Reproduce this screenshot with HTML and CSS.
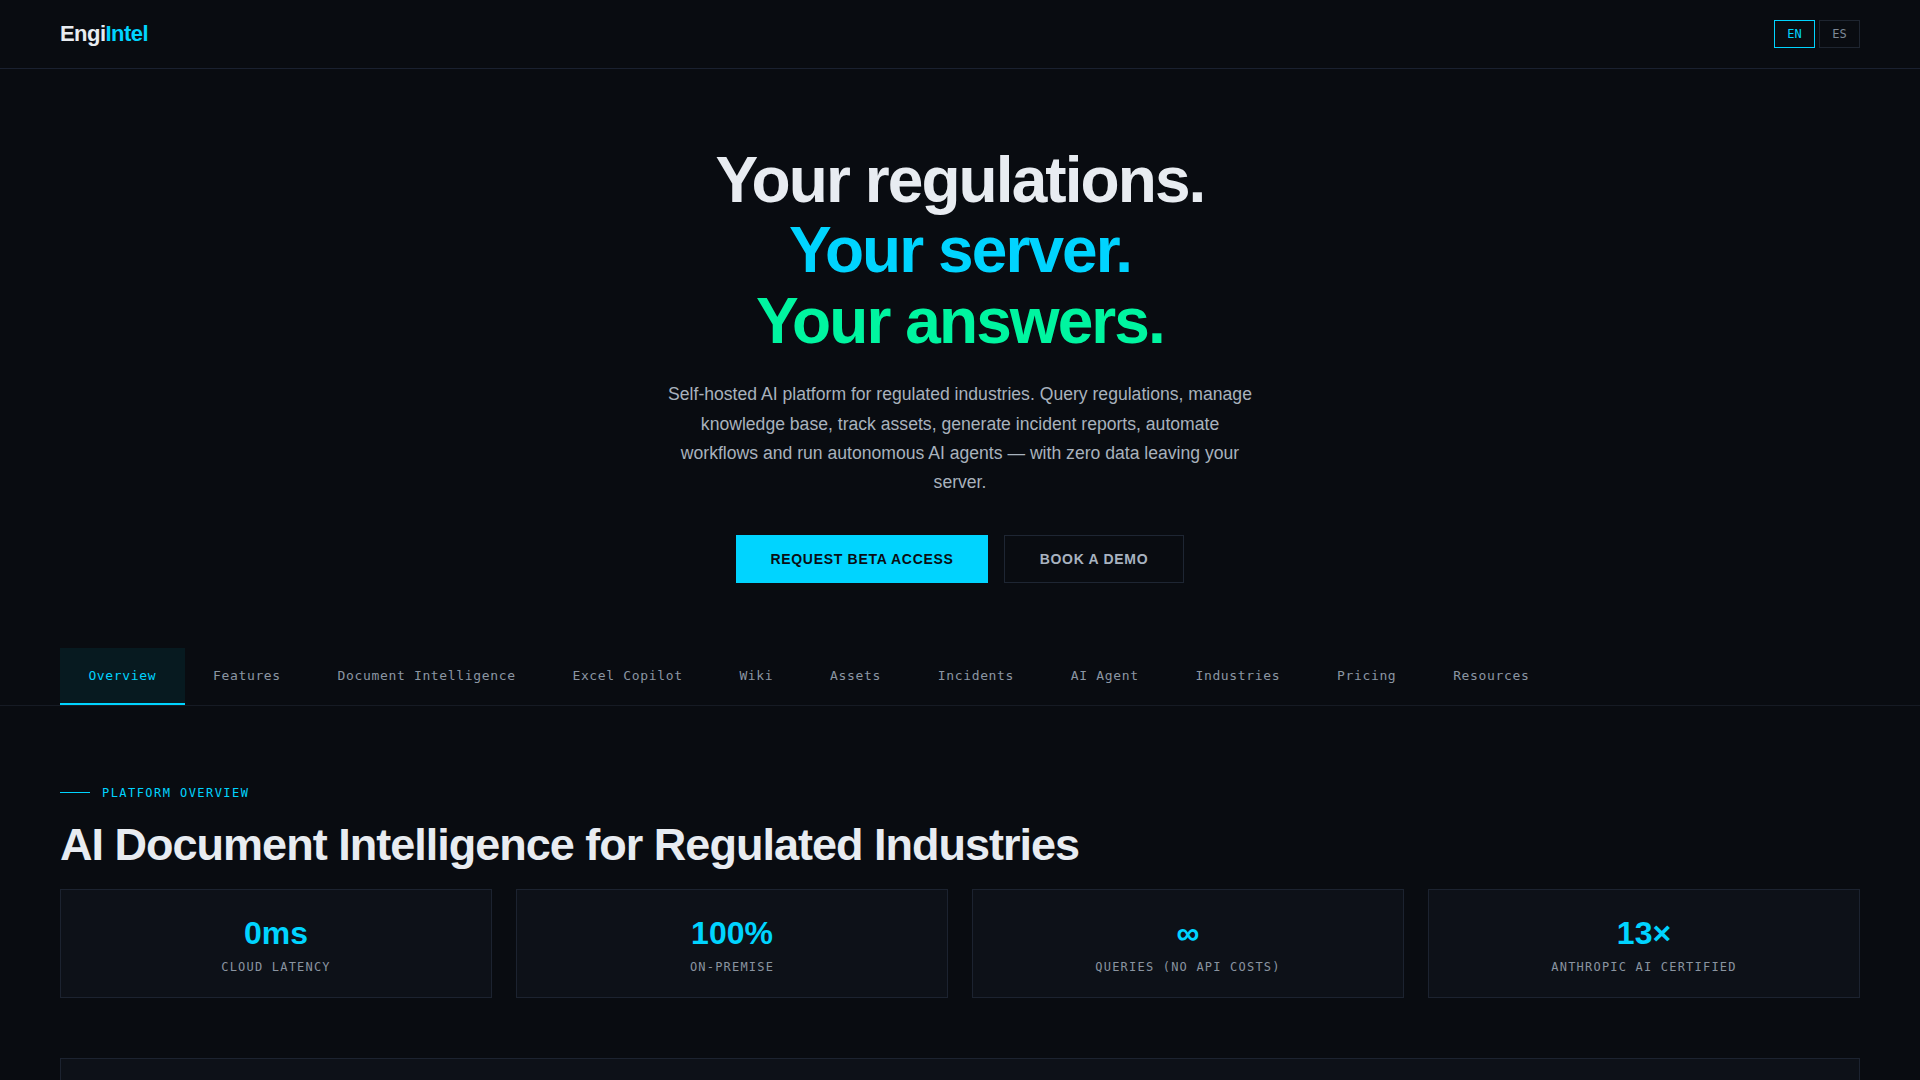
FILE: index.html
```html
<!DOCTYPE html>
<html lang="en">
<head>
<meta charset="utf-8">
<title>EngiIntel</title>
<link rel="stylesheet" href="styles.css">
</head>
<body>
<header class="site-header">
  <div class="logo"><span class="logo-a">Engi</span><span class="logo-b">Intel</span></div>
  <div class="lang">
    <button class="lang-btn active">EN</button>
    <button class="lang-btn">ES</button>
  </div>
</header>

<section class="hero">
  <h1 class="hero-title">
    <span class="l1">Your regulations.</span>
    <span class="l2">Your server.</span>
    <span class="l3">Your answers.</span>
  </h1>
  <p class="hero-text">Self-hosted AI platform for regulated industries. Query regulations, manage knowledge base, track assets, generate incident reports, automate workflows and run autonomous AI agents — with zero data leaving your server.</p>
  <div class="hero-actions">
    <a class="btn btn-primary">REQUEST BETA ACCESS</a>
    <a class="btn btn-ghost">BOOK A DEMO</a>
  </div>
</section>

<nav class="tabs">
  <a class="tab active">Overview</a>
  <a class="tab">Features</a>
  <a class="tab">Document Intelligence</a>
  <a class="tab">Excel Copilot</a>
  <a class="tab">Wiki</a>
  <a class="tab">Assets</a>
  <a class="tab">Incidents</a>
  <a class="tab">AI Agent</a>
  <a class="tab">Industries</a>
  <a class="tab">Pricing</a>
  <a class="tab">Resources</a>
</nav>

<main class="section">
  <div class="eyebrow"><span class="eyebrow-line"></span>PLATFORM OVERVIEW</div>
  <h2 class="section-title">AI Document Intelligence for Regulated Industries</h2>
  <div class="stats">
    <div class="stat"><div class="stat-num">0ms</div><div class="stat-label">CLOUD LATENCY</div></div>
    <div class="stat"><div class="stat-num">100%</div><div class="stat-label">ON-PREMISE</div></div>
    <div class="stat"><div class="stat-num">∞</div><div class="stat-label">QUERIES (NO API COSTS)</div></div>
    <div class="stat"><div class="stat-num">13×</div><div class="stat-label">ANTHROPIC AI CERTIFIED</div></div>
  </div>
  <div class="panel"></div>
</main>
</body>
</html>
```

FILE: styles.css
```css
* { box-sizing: border-box; }
html, body { margin: 0; padding: 0; }
body {
  background: #090c11;
  color: #e8ecf1;
  font-family: "Liberation Sans", Arial, sans-serif;
  overflow: hidden;
}

.site-header {
  height: 69px;
  padding: 0 60px;
  display: flex;
  align-items: center;
  justify-content: space-between;
  border-bottom: 1px solid #1a2130;
}
.logo {
  font-size: 22px;
  font-weight: 700;
  letter-spacing: -0.025em;
}
.logo-a { color: #e8ecf1; }
.logo-b { color: #00d4ff; }
.lang { display: flex; gap: 4px; }
.lang-btn {
  font-family: "DejaVu Sans Mono", monospace;
  font-size: 12px;
  line-height: 14px;
  padding: 6px 12px;
  background: transparent;
  color: #7d8896;
  border: 1px solid #1e2530;
  border-radius: 0;
  width: 41px;
  height: 28px;
}
.lang-btn.active { color: #00d4ff; border: 1.5px solid #00d4ff; }

.hero {
  padding: 76px 0 65px;
  display: flex;
  flex-direction: column;
  align-items: center;
  text-align: center;
}
.hero-title {
  margin: 0 0 24px;
  font-size: 64px;
  line-height: 70.4px;
  font-weight: 700;
  letter-spacing: -0.03em;
  display: flex;
  flex-direction: column;
}
.l1 { color: #e8ecf1; }
.l2 { color: #00d4ff; }
.l3 { color: #00f5a0; }
.hero-text {
  margin: 0;
  max-width: 600px;
  font-size: 17.6px;
  line-height: 29.4px;
  color: #a8b2bd;
}
.hero-actions {
  margin-top: 37px;
  display: flex;
  gap: 16px;
}
.btn {
  display: inline-flex;
  align-items: center;
  justify-content: center;
  height: 48px;
  padding: 0 34px;
  font-size: 14px;
  font-weight: 700;
  letter-spacing: 0.05em;
}
.btn-primary { background: #00d4ff; color: #0a0e14; width: 252px; }
.btn-ghost { border: 1px solid #1e2633; color: #a8b3c0; width: 180px; }

.tabs {
  display: flex;
  padding: 0 60px;
  border-bottom: 1px solid #161b24;
}
.tab {
  font-family: "DejaVu Sans Mono", monospace;
  font-size: 13px;
  line-height: 15px;
  letter-spacing: 0.05em;
  color: #8b96a3;
  padding: 20px 28.4px;
  border-bottom: 2px solid transparent;
}
.tab.active {
  color: #00d4ff;
  background: #071a20;
  border-bottom-color: #00d4ff;
}

.section {
  padding: 79px 60px 0;
}
.eyebrow {
  display: flex;
  align-items: center;
  gap: 12px;
  font-family: "DejaVu Sans Mono", monospace;
  font-size: 12px;
  line-height: 16px;
  letter-spacing: 0.12em;
  color: #00d4ff;
}
.eyebrow-line {
  width: 30px;
  height: 1px;
  background: #00d4ff;
}
.section-title {
  margin: 17px 0 17px;
  font-size: 45px;
  line-height: 54px;
  font-weight: 700;
  letter-spacing: -0.022em;
  color: #e8ecf1;
}
.stats {
  display: grid;
  grid-template-columns: repeat(4, 1fr);
  gap: 24px;
}
.stat {
  background: #0d1118;
  border: 1px solid #1c2330;
  padding: 24px 16px 23px;
  text-align: center;
  height: 109px;
}
.stat-num {
  font-size: 32px;
  line-height: 38px;
  font-weight: 700;
  color: #00d4ff;
}
.stat-label {
  margin-top: 7px;
  font-family: "DejaVu Sans Mono", monospace;
  font-size: 12px;
  line-height: 16px;
  letter-spacing: 0.1em;
  color: #8a94a0;
}
.panel {
  margin-top: 60px;
  height: 300px;
  background: #0d1118;
  border: 1px solid #1c2330;
}
```
